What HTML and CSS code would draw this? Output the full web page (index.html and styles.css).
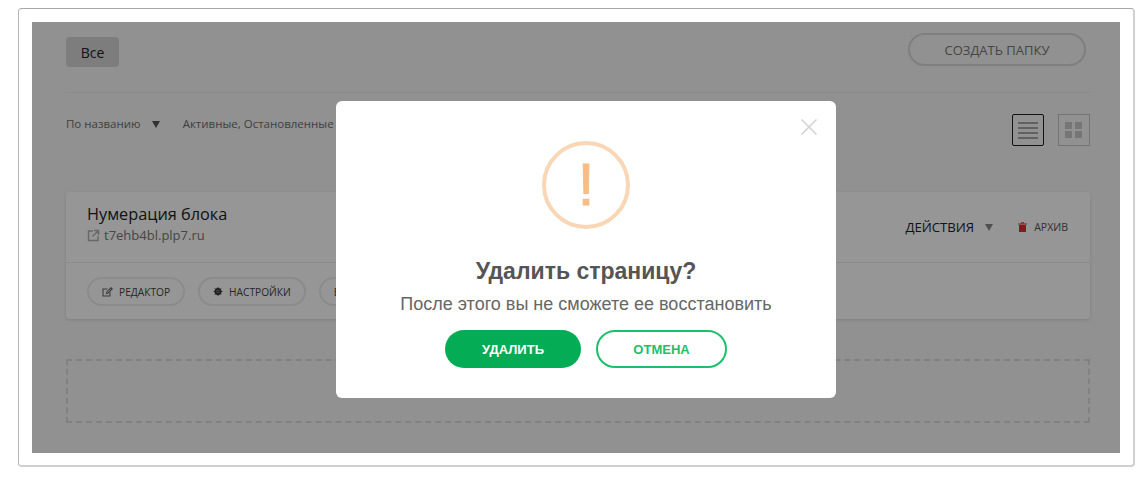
FILE: index.html
```html
<!DOCTYPE html>
<html lang="en">
<head>
    <meta charset="UTF-8">
    <meta name="viewport" content="width=device-width, initial-scale=1.0">
    <title>Удалить страницу</title>
    <link rel="stylesheet" href="styles.css">
</head>
<body>
    <div class="frame">
        <div class="page">
            <div class="top-bar">
                <span class="tab">Все</span>
                <span class="new-folder">СОЗДАТЬ ПАПКУ</span>
            </div>
            <div class="filter-bar">
                <div class="filters">
                    <span>По названию</span>
                    <span class="arrow"></span>
                    <span class="filter-status">Активные, Остановленные</span>
                </div>
                <div class="views">
                    <span class="view view-active">
                        <svg width="22" height="19" viewBox="0 0 22 19"><path d="M1 2h20M1 7h20M1 12h20M1 17h20" stroke="#8a8a8a" stroke-width="1.600"/></svg>
                    </span>
                    <span class="view">
                        <svg width="20" height="18" viewBox="0 0 20 18" fill="#c9c9c9"><rect x="1" y="1" width="7" height="7"/><rect x="11" y="1" width="7" height="7"/><rect x="1" y="10" width="7" height="7"/><rect x="11" y="10" width="7" height="7"/></svg>
                    </span>
                </div>
            </div>

            <div class="card">
                <div class="card-head">
                    <div>
                        <div class="card-title">Нумерация блока</div>
                        <div class="card-link">
                            <svg width="13" height="13" viewBox="0 0 13 13" fill="none" stroke="#b0b0b0" stroke-width="1.400"><path d="M6 2H1.500v9.500h9.500V7M7 1.500h4.500V6M11.500 1.500L5.500 7.500"/></svg>
                            t7ehb4bl.plp7.ru
                        </div>
                    </div>
                    <div class="card-actions">
                        <span class="actions">ДЕЙСТВИЯ</span>
                        <span class="arrow arrow-light"></span>
                        <span class="archive">
                            <svg width="9" height="10" viewBox="0 0 9 10" fill="#e02b35"><path d="M0 1.500h9v1H0zM3 .2h3v1H3zM1 3h7v7H1z"/></svg>
                            АРХИВ
                        </span>
                    </div>
                </div>
                <div class="card-foot">
                    <span class="pill">
                        <svg width="11" height="10" viewBox="0 0 11 10" fill="none" stroke="#666" stroke-width="1.100"><path d="M8 5.500V9H1V2h4.500M4.500 6.500l.4-1.800L9 .8l1.200 1.200-4 4z"/></svg>
                        РЕДАКТОР
                    </span>
                    <span class="pill">
                        <svg width="10" height="9" viewBox="0 0 9 9"><circle cx="4.500" cy="4.500" r="2.600" fill="none" stroke="#333" stroke-width="1.800"/><path d="M4.500 0v9M0 4.500h9M1.300 1.300l6.400 6.400M7.700 1.300L1.300 7.700" stroke="#333" stroke-width=".8"/></svg>
                        НАСТРОЙКИ
                    </span>
                    <span class="pill">Б</span>
                </div>
            </div>

            <div class="dropzone"></div>

            <div class="overlay">
                <div class="modal">
                    <svg class="modal-close" width="16" height="16" viewBox="0 0 16 16"><path d="M.5.500l15 15M15.500.500l-15 15" stroke="#d2d2d2" stroke-width="1.500"/></svg>
                    <div class="warn-icon">!</div>
                    <h2 class="modal-title">Удалить страницу?</h2>
                    <p class="modal-text">После этого вы не сможете ее восстановить</p>
                    <div class="modal-btns">
                        <button class="btn btn-delete">УДАЛИТЬ</button>
                        <button class="btn btn-cancel">ОТМЕНА</button>
                    </div>
                </div>
            </div>
        </div>
    </div>
</body>
</html>
```

FILE: styles.css
```css
* {
    box-sizing: border-box;
}

body {
    margin: 0;
    background: #fff;
    font-family: "Open Sans", "Noto Sans", sans-serif;
    color: #333;
}

.frame {
    width: 1117px;
    height: 459px;
    margin: 8px 0 0 18px;
    padding: 13px 13px 12px 13px;
    background: #fff;
    border: 1px solid #d0d0d0;
    border-top-color: #a8a8a8;
    border-left-color: #b5b5b5;
    border-right-width: 2px;
    border-bottom-width: 2px;
    border-radius: 4px;
}

.page {
    position: relative;
    height: 431px;
    padding: 11px 30px 0 34px;
    background: #f5f6f5;
}

.top-bar {
    display: flex;
    justify-content: space-between;
    align-items: flex-start;
    height: 60px;
    border-bottom: 1px solid #ececec;
}

.tab {
    display: flex;
    align-items: center;
    justify-content: center;
    width: 53px;
    height: 30px;
    margin-top: 4px;
    border-radius: 4px;
    background: #d5d5d5;
    font-size: 14px;
    color: #222;
}

.new-folder {
    display: flex;
    align-items: center;
    justify-content: center;
    width: 178px;
    height: 33px;
    margin-right: 4px;
    border: 2px solid #d8d8d8;
    border-radius: 17px;
    font-size: 13px;
    color: #777;
}

.filter-bar {
    display: flex;
    justify-content: space-between;
    align-items: flex-start;
    height: 99px;
    padding-top: 20px;
}

.filters {
    display: flex;
    align-items: center;
    height: 21px;
    font-size: 11.500px;
    color: #6e6e6e;
}

.arrow {
    width: 0;
    height: 0;
    margin: 1px 23px 0 11px;
    border-left: 4px solid transparent;
    border-right: 4px solid transparent;
    border-top: 7px solid #555;
}

.arrow-light {
    margin: 0 25px 0 11px;
    border-top-color: #888;
}

.views {
    display: flex;
    gap: 14px;
    margin-top: 1px;
}

.view {
    display: flex;
    align-items: center;
    justify-content: center;
    width: 32px;
    height: 32px;
    border: 1px solid #c4c4c4;
}

.view-active {
    border-color: #222;
    border-radius: 2px;
}

.card {
    height: 127px;
    background: #fff;
    border-radius: 3px;
    box-shadow: 0 1px 3px rgba(0, 0, 0, 0.12);
}

.card-head {
    display: flex;
    justify-content: space-between;
    align-items: center;
    height: 71px;
    padding: 0 22px 6px 21px;
    border-bottom: 1px solid #ebebeb;
}

.card-title {
    font-size: 16.300px;
    line-height: 22px;
    color: #222;
}

.card-link {
    display: flex;
    align-items: center;
    gap: 4px;
    font-size: 13px;
    line-height: 20px;
    color: #777;
}

.card-actions {
    display: flex;
    align-items: center;
    padding-top: 6px;
}

.actions {
    font-size: 13.200px;
    color: #222;
}

.archive {
    display: flex;
    align-items: center;
    gap: 7px;
    font-size: 10.500px;
    color: #555;
}

.card-foot {
    display: flex;
    gap: 13px;
    padding: 14px 21px 0;
}

.pill {
    display: flex;
    align-items: center;
    gap: 6px;
    height: 29px;
    padding: 0 13px;
    border: 2px solid #ececec;
    border-radius: 15px;
    font-size: 10.200px;
    color: #444;
}

.dropzone {
    height: 64px;
    margin-top: 40px;
    border: 2px dashed #dcdcdc;
}

.overlay {
    position: absolute;
    top: 0;
    left: 0;
    width: 100%;
    height: 100%;
    padding: 79px 0 0 304px;
    background: rgba(0, 0, 0, 0.41);
}

.modal {
    position: relative;
    display: flex;
    flex-direction: column;
    align-items: center;
    width: 500px;
    height: 297px;
    padding-top: 40px;
    background: #fff;
    border-radius: 6px;
    font-family: "Liberation Sans", Arial, sans-serif;
}

.modal-close {
    position: absolute;
    top: 18px;
    right: 19px;
}

.warn-icon {
    display: flex;
    align-items: center;
    justify-content: center;
    width: 88px;
    height: 88px;
    border: 4px solid #f9d6b5;
    border-radius: 50%;
    font-size: 60px;
    line-height: 1;
    color: #f8bc85;
    -webkit-text-stroke: 1px #f8bc85;
}

.modal-title {
    margin: 27px 0 0;
    font-size: 23px;
    line-height: 30px;
    font-weight: bold;
    color: #555;
}

.modal-text {
    margin: 7px 0 0;
    font-size: 18px;
    line-height: 22px;
    color: #666;
}

.modal-btns {
    display: flex;
    gap: 15px;
    margin-top: 15px;
}

.btn {
    height: 38px;
    border-radius: 19px;
    font-family: inherit;
    font-size: 13px;
    font-weight: bold;
}

.btn-delete {
    width: 136px;
    border: none;
    background: #05ac56;
    color: #fff;
}

.btn-cancel {
    width: 131px;
    border: 2px solid #1dbf6b;
    background: #fff;
    color: #1dbf6b;
}
```
